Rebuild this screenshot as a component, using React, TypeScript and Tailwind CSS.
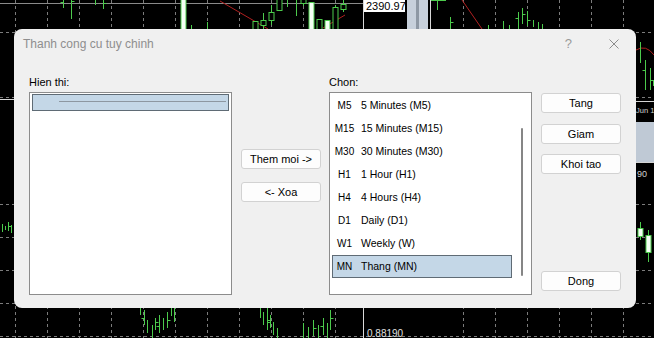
import React from "react";

const G = "#4ccb4c";
const GRID = "#7c7c7c";

// wick / OHLC lines: x, y1, y2
const bars: [number, number, number][] = [
  [63, 0, 8], [71, 0, 19], [95, 0, 5], [103, 0, 9], [191, 25, 29], [207, 22, 29],
  [263, 13, 29], [271, 5, 25], [287, 0, 7], [296, 0, 16], [303, 0, 6], [335, 5, 29], [343, 0, 12],
  [437, 0, 10], [450, 17, 29], [488, 25, 29], [503, 21, 29], [509, 25, 29], [518, 12, 29],
  [522, 8, 24], [527, 11, 26], [533, 20, 27], [538, 22, 29], [542, 24, 29],
  [640, 42, 63], [645, 60, 90], [650, 68, 90], [653, 80, 86], [640, 222, 240], [648, 230, 262],
  [2, 224, 232], [5, 226, 230], [8, 222, 231], [11, 225, 233],
  [140, 308, 315], [144, 310, 325], [147, 320, 333], [152, 325, 338], [155, 318, 330],
  [159, 315, 333], [163, 318, 330], [167, 312, 328], [171, 308, 316], [174, 308, 322],
  [260, 308, 318], [263, 312, 325], [267, 308, 330], [270, 315, 328], [273, 322, 335], [277, 328, 338],
  [303, 323, 338], [308, 327, 338], [313, 320, 336], [318, 325, 338], [323, 318, 335], [327, 323, 338], [330, 310, 330],
];

// small OHLC ticks: x, y, side
const ticks: [number, number, number][] = [
  [63, 2, -1], [71, 1, 1], [103, 3, 1], [450, 22, 1], [518, 18, -1], [522, 14, 1], [527, 20, 1],
  [645, 70, -1], [650, 80, 1], [8, 226, 1], [144, 318, -1], [155, 322, 1], [159, 326, -1],
  [167, 320, 1], [267, 320, 1], [270, 322, -1], [313, 328, 1], [323, 326, -1], [330, 318, 1],
];

// candle bodies: x, y1, y2, hollow (white)
const boxes: [number, number, number, boolean][] = [
  [183, -2, 29, true], [255, 21, 30, false], [263, 20, 25, false], [271, 12, 20, false],
  [279, -2, 10, false], [303, -2, 3, false], [311, 2, 30, true], [319, 19, 30, false],
  [327, 20, 30, true], [335, 7, 30, false], [343, 4, 9, false],
  [640, 228, 236, true], [648, 235, 252, true],
];

const vGrid = [15, 47, 79, 111, 143, 175, 207, 239, 271, 303, 335, 463, 495, 527, 559, 591, 623];
const hGrid = [32, 97, 204, 237, 270, 303, 336];

function ChartBackground() {
  return (
    <svg className="absolute inset-0" width={654} height={338} viewBox="0 0 654 338">
      <rect width={654} height={338} fill="#000" />
      {vGrid.map((x) => (
        <line key={"v" + x} x1={x + 0.5} y1={0} x2={x + 0.5} y2={338} stroke={GRID} strokeDasharray="3 3" />
      ))}
      {hGrid.map((y) => (
        <line key={"h" + y} x1={0} y1={y + 0.5} x2={654} y2={y + 0.5} stroke={GRID} strokeDasharray="3 3" />
      ))}
      <line x1={0} y1={3.5} x2={363} y2={3.5} stroke="#8a8a8a" />
      <line x1={0} y1={99.5} x2={14} y2={99.5} stroke="#d4d4d4" />
      <line x1={636} y1={101.5} x2={654} y2={101.5} stroke="#d4d4d4" />
      <line x1={636} y1={162.5} x2={654} y2={162.5} stroke="#d4d4d4" />
      <line x1={363.5} y1={0} x2={363.5} y2={338} stroke="#d9d9d9" />
      <line x1={430.5} y1={0} x2={430.5} y2={30} stroke="#d9d9d9" />

      <rect x={407} y={0} width={21} height={29} fill="#c7d0db" />
      <rect x={416} y={0} width={3} height={29} fill="#8e98a4" />
      <rect x={636} y={122} width={18} height={40} fill="#bfc9d5" />

      <line x1={220} y1={1} x2={268} y2={29} stroke="#b02020" />
      <line x1={323} y1={28} x2={345} y2={15} stroke="#b02020" />
      <line x1={462} y1={0} x2={482} y2={29} stroke="#b02020" />
      <path d="M636 50 Q646 44 654 55" stroke="#b02020" fill="none" />
      <line x1={431} y1={0.5} x2={446} y2={0.5} stroke={G} />

      {bars.map(([x, a, b], i) => (
        <line key={"b" + i} x1={x + 0.5} y1={a} x2={x + 0.5} y2={b} stroke={G} />
      ))}
      {ticks.map(([x, y, s], i) => (
        <line key={"t" + i} x1={x + 0.5} y1={y + 0.5} x2={x + 0.5 + s * 3} y2={y + 0.5} stroke={G} />
      ))}
      {boxes.map(([x, a, b, hollow], i) => (
        <rect key={"c" + i} x={x - 2} y={a + 0.5} width={5} height={b - a} fill={hollow ? "#f4fff4" : "#000"} stroke={G} />
      ))}

      <rect x={364} y={0} width={41} height={12} fill="#fff" />
      <text x={366} y={10} fontSize={11} fontFamily="Liberation Sans, Arial, sans-serif" fill="#000">2390.97</text>
      <text x={367} y={337} fontSize={10} fontFamily="Liberation Sans, Arial, sans-serif" fill="#e0e0e0">0.88190</text>
      <text x={636} y={113} fontSize={7.5} fontFamily="Liberation Sans, Arial, sans-serif" fill="#d0d0d0">Jun 1</text>
      <text x={637} y={177} fontSize={9} fontFamily="Liberation Sans, Arial, sans-serif" fill="#d0d0d0">90</text>
    </svg>
  );
}

function Btn({ children, className = "" }: { children: React.ReactNode; className?: string }) {
  return (
    <div className={"h-[20px] w-[80px] rounded-[3px] border border-[#d2d2d2] bg-[#fdfdfd] text-center text-[11px] leading-[18px] text-black " + className}>
      {children}
    </div>
  );
}

const periods = [
  { code: "M5", label: "5 Minutes (M5)" },
  { code: "M15", label: "15 Minutes (M15)" },
  { code: "M30", label: "30 Minutes (M30)" },
  { code: "H1", label: "1 Hour (H1)" },
  { code: "H4", label: "4 Hours (H4)" },
  { code: "D1", label: "Daily (D1)" },
  { code: "W1", label: "Weekly (W)" },
  { code: "MN", label: "Thang (MN)", selected: true },
];

export default function App() {
  return (
    <div className="relative h-[338px] w-[654px] overflow-hidden bg-black font-['Liberation_Sans',Arial,sans-serif]">
      <ChartBackground />

      <div className="absolute left-[14px] top-[29px] flex h-[279px] w-[622px] flex-col rounded-[8px] bg-[#f0f0f0]">
        {/* title bar */}
        <div className="flex h-[30px] items-center pl-[9px] pr-[17px]">
          <span className="text-[12px] text-[#8e8e8e]">Thanh cong cu tuy chinh</span>
          <span className="ml-auto mr-[37px] text-[13px] text-[#9a9a9a]">?</span>
          <svg width={10} height={10} viewBox="0 0 10 10">
            <path d="M0.5 0.5 L9.5 9.5 M9.5 0.5 L0.5 9.5" stroke="#8c8c8c" strokeWidth={1} />
          </svg>
        </div>

        <div className="flex pl-[15px] pt-[15px]">
          {/* Hien thi */}
          <div className="w-[203px]">
            <div className="h-[18px] text-[11px] leading-[16px] text-black">Hien thi:</div>
            <div className="h-[203px] border border-[#8c8c8c] bg-white px-[2px] pt-[1px]">
              <div className="h-[17px] border border-[#5f6b75] bg-[#c4d7e7] pt-[6px]">
                <div className="ml-[26px] mr-[2px] h-px bg-[#8d97a1]" />
              </div>
            </div>
          </div>

          {/* middle buttons */}
          <div className="ml-[9px] flex w-[80px] flex-col gap-[13px] pt-[75px]">
            <Btn>Them moi -&gt;</Btn>
            <Btn>&lt;- Xoa</Btn>
          </div>

          {/* Chon */}
          <div className="ml-[8px] w-[203px]">
            <div className="h-[18px] text-[11px] leading-[16px] text-black">Chon:</div>
            <div className="flex h-[203px] border border-[#8c8c8c] bg-white">
              <div className="w-[184px] pl-[2px] pt-[1px]">
                {periods.map((p) => (
                  <div
                    key={p.code}
                    className={
                      "flex h-[23px] w-[180px] items-center border " +
                      (p.selected ? "border-[#5f6b75] bg-[#c4d7e7]" : "border-transparent")
                    }
                  >
                    <span className="w-[23px] text-center text-[10px] text-black">{p.code}</span>
                    <span className="ml-[5px] text-[10.5px] text-black">{p.label}</span>
                  </div>
                ))}
              </div>
              <div className="w-[17px] pt-[35px]">
                <div className="ml-[7px] h-[148px] w-[2px] rounded-full bg-[#868686]" />
              </div>
            </div>
          </div>

          {/* right buttons */}
          <div className="ml-[9px] flex w-[80px] flex-col pt-[19px]">
            <Btn>Tang</Btn>
            <Btn className="mt-[11px]">Giam</Btn>
            <Btn className="mt-[10px]">Khoi tao</Btn>
            <Btn className="mt-[97px]">Dong</Btn>
          </div>
        </div>
      </div>
    </div>
  );
}
